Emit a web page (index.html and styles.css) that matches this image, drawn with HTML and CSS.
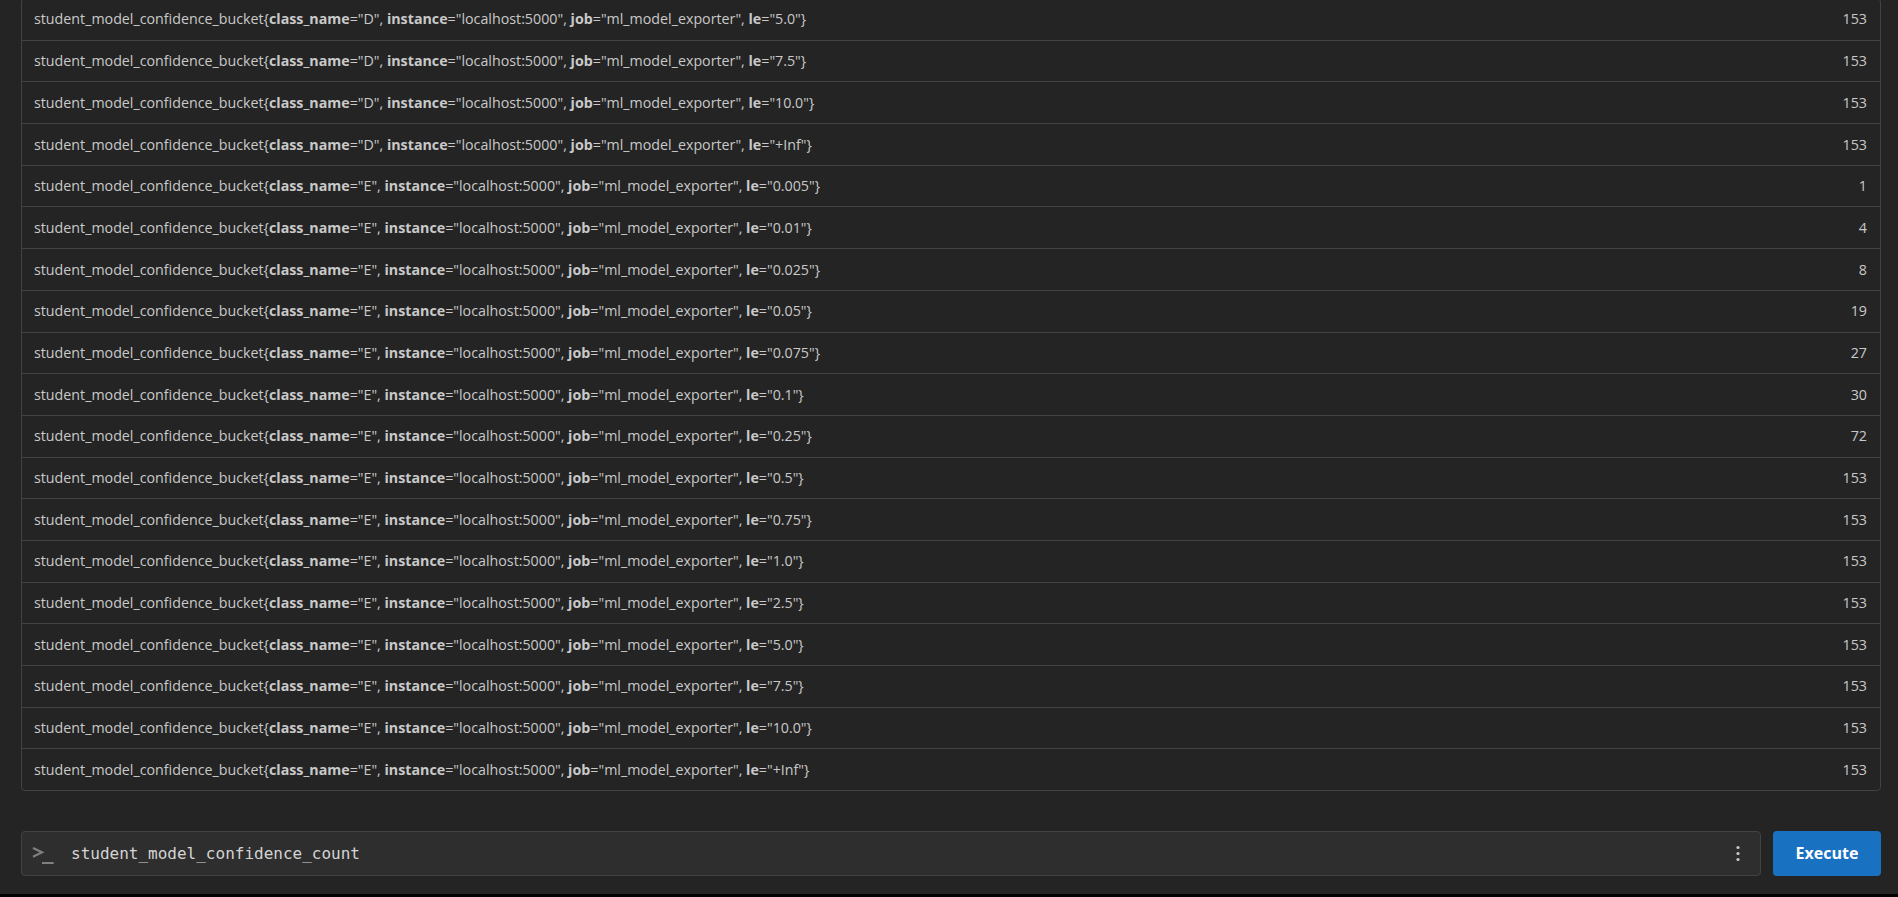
FILE: index.html
```html
<!DOCTYPE html>
<html>
<head>
<meta charset="utf-8">
<link rel="stylesheet" href="styles.css">
</head>
<body>
<div class="page">
  <div class="results">
    <div class="row"><span class="series">student_model_confidence_bucket{<b>class_name</b>="D", <b>instance</b>="localhost:5000", <b>job</b>="ml_model_exporter", <b>le</b>="5.0"}</span><span class="value">153</span></div>
    <div class="row"><span class="series">student_model_confidence_bucket{<b>class_name</b>="D", <b>instance</b>="localhost:5000", <b>job</b>="ml_model_exporter", <b>le</b>="7.5"}</span><span class="value">153</span></div>
    <div class="row"><span class="series">student_model_confidence_bucket{<b>class_name</b>="D", <b>instance</b>="localhost:5000", <b>job</b>="ml_model_exporter", <b>le</b>="10.0"}</span><span class="value">153</span></div>
    <div class="row"><span class="series">student_model_confidence_bucket{<b>class_name</b>="D", <b>instance</b>="localhost:5000", <b>job</b>="ml_model_exporter", <b>le</b>="+Inf"}</span><span class="value">153</span></div>
    <div class="row"><span class="series">student_model_confidence_bucket{<b>class_name</b>="E", <b>instance</b>="localhost:5000", <b>job</b>="ml_model_exporter", <b>le</b>="0.005"}</span><span class="value">1</span></div>
    <div class="row"><span class="series">student_model_confidence_bucket{<b>class_name</b>="E", <b>instance</b>="localhost:5000", <b>job</b>="ml_model_exporter", <b>le</b>="0.01"}</span><span class="value">4</span></div>
    <div class="row"><span class="series">student_model_confidence_bucket{<b>class_name</b>="E", <b>instance</b>="localhost:5000", <b>job</b>="ml_model_exporter", <b>le</b>="0.025"}</span><span class="value">8</span></div>
    <div class="row"><span class="series">student_model_confidence_bucket{<b>class_name</b>="E", <b>instance</b>="localhost:5000", <b>job</b>="ml_model_exporter", <b>le</b>="0.05"}</span><span class="value">19</span></div>
    <div class="row"><span class="series">student_model_confidence_bucket{<b>class_name</b>="E", <b>instance</b>="localhost:5000", <b>job</b>="ml_model_exporter", <b>le</b>="0.075"}</span><span class="value">27</span></div>
    <div class="row"><span class="series">student_model_confidence_bucket{<b>class_name</b>="E", <b>instance</b>="localhost:5000", <b>job</b>="ml_model_exporter", <b>le</b>="0.1"}</span><span class="value">30</span></div>
    <div class="row"><span class="series">student_model_confidence_bucket{<b>class_name</b>="E", <b>instance</b>="localhost:5000", <b>job</b>="ml_model_exporter", <b>le</b>="0.25"}</span><span class="value">72</span></div>
    <div class="row"><span class="series">student_model_confidence_bucket{<b>class_name</b>="E", <b>instance</b>="localhost:5000", <b>job</b>="ml_model_exporter", <b>le</b>="0.5"}</span><span class="value">153</span></div>
    <div class="row"><span class="series">student_model_confidence_bucket{<b>class_name</b>="E", <b>instance</b>="localhost:5000", <b>job</b>="ml_model_exporter", <b>le</b>="0.75"}</span><span class="value">153</span></div>
    <div class="row"><span class="series">student_model_confidence_bucket{<b>class_name</b>="E", <b>instance</b>="localhost:5000", <b>job</b>="ml_model_exporter", <b>le</b>="1.0"}</span><span class="value">153</span></div>
    <div class="row"><span class="series">student_model_confidence_bucket{<b>class_name</b>="E", <b>instance</b>="localhost:5000", <b>job</b>="ml_model_exporter", <b>le</b>="2.5"}</span><span class="value">153</span></div>
    <div class="row"><span class="series">student_model_confidence_bucket{<b>class_name</b>="E", <b>instance</b>="localhost:5000", <b>job</b>="ml_model_exporter", <b>le</b>="5.0"}</span><span class="value">153</span></div>
    <div class="row"><span class="series">student_model_confidence_bucket{<b>class_name</b>="E", <b>instance</b>="localhost:5000", <b>job</b>="ml_model_exporter", <b>le</b>="7.5"}</span><span class="value">153</span></div>
    <div class="row"><span class="series">student_model_confidence_bucket{<b>class_name</b>="E", <b>instance</b>="localhost:5000", <b>job</b>="ml_model_exporter", <b>le</b>="10.0"}</span><span class="value">153</span></div>
    <div class="row"><span class="series">student_model_confidence_bucket{<b>class_name</b>="E", <b>instance</b>="localhost:5000", <b>job</b>="ml_model_exporter", <b>le</b>="+Inf"}</span><span class="value">153</span></div>
  </div>

  <div class="query-bar">
    <div class="query-input">
      <svg class="prompt-icon" width="24" height="22" viewBox="0 0 24 22">
        <polyline points="2,2 11,6.3 2,10.7" fill="none" stroke="#7f7f7f" stroke-width="2.2" stroke-linejoin="miter"/>
        <line x1="11" y1="17" x2="22.7" y2="17" stroke="#7f7f7f" stroke-width="2"/>
      </svg>
      <span class="query-text">student_model_confidence_count</span>
      <svg class="kebab" width="6" height="18" viewBox="0 0 6 18">
        <circle cx="3" cy="3.5" r="1.6" fill="#c9c9c9"/>
        <circle cx="3" cy="9.5" r="1.6" fill="#c9c9c9"/>
        <circle cx="3" cy="15.5" r="1.6" fill="#c9c9c9"/>
      </svg>
    </div>
    <button class="execute">Execute</button>
  </div>
</div>
<div class="window-edge"></div>
</body>
</html>
```

FILE: styles.css
```css
html, body {
  margin: 0;
  padding: 0;
  background: #242424;
  height: 897px;
  overflow: hidden;
}

body {
  display: flex;
  flex-direction: column;
  font-family: "Open Sans", "Noto Sans", sans-serif;
  color: #c9c9c9;
}

.page {
  flex: 1;
  display: flex;
  flex-direction: column;
  padding: 0 17px 0 21px;
  margin-top: -2px;
}

.results {
  border: 1px solid #424242;
  border-radius: 4px;
  display: flex;
  flex-direction: column;
}

.row {
  display: flex;
  justify-content: space-between;
  align-items: center;
  height: 40.7px;
  padding: 0 13px 0 12px;
  border-top: 1px solid #424242;
  font-size: 14.25px;
  line-height: 21.7px;
}

.row:first-child {
  border-top: none;
}

.series b {
  font-weight: 700;
}

.query-bar {
  display: flex;
  gap: 12px;
  margin-top: 39.7px;
  height: 45px;
}

.query-input {
  flex: 1;
  display: flex;
  align-items: center;
  background: #2e2e2e;
  border: 1px solid #424242;
  border-radius: 4px;
  padding: 0 0 0 9px;
}

.prompt-icon {
  display: block;
  margin-top: 7px;
}

.query-text {
  font-family: "DejaVu Sans Mono", monospace;
  font-size: 16px;
  margin-left: 16px;
  flex: 1;
  color: #d4d4d4;
}

.kebab {
  display: block;
  margin-right: 19px;
}

.execute {
  width: 108px;
  border: none;
  border-radius: 4px;
  background: #1971c2;
  color: #ffffff;
  font-family: "Open Sans", "Noto Sans", sans-serif;
  font-weight: 700;
  font-size: 16px;
  padding: 0;
}

.window-edge {
  height: 3px;
  background: #000;
}
```
